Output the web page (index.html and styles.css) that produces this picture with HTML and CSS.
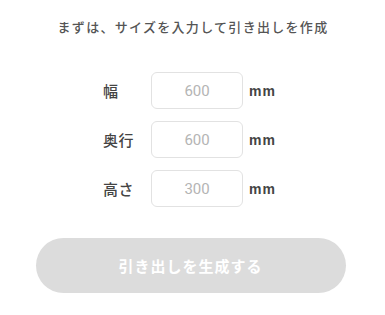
FILE: index.html
```html
<!DOCTYPE html>
<html lang="ja">
<head>
<meta charset="utf-8">
<link rel="stylesheet" href="styles.css">
</head>
<body>
<div class="page">
  <p class="title">まずは、サイズを入力して引き出しを作成</p>
  <div class="form">
    <div class="row">
      <span class="label">幅</span>
      <input class="field" type="text" placeholder="600">
      <span class="unit">mm</span>
    </div>
    <div class="row">
      <span class="label">奥行</span>
      <input class="field" type="text" placeholder="600">
      <span class="unit">mm</span>
    </div>
    <div class="row">
      <span class="label">高さ</span>
      <input class="field" type="text" placeholder="300">
      <span class="unit">mm</span>
    </div>
  </div>
  <button class="submit" type="button">引き出しを生成する</button>
</div>
</body>
</html>
```

FILE: styles.css
```css
html, body {
  margin: 0;
  padding: 0;
  background: #ffffff;
}
body {
  font-family: "Noto Sans CJK JP", "Noto Sans", sans-serif;
  color: #444;
}
.page {
  width: 385px;
  display: flex;
  flex-direction: column;
  align-items: center;
  padding-top: 17px;
}
.title {
  margin: 0;
  font-size: 13px;
  line-height: 20px;
  letter-spacing: 1.3px;
  font-weight: 500;
  color: #555;
  padding-left: 1px;
}
.form {
  margin-top: 35px;
  display: flex;
  flex-direction: column;
  gap: 12px;
  padding-right: 6px;
}
.row {
  display: grid;
  grid-template-columns: 40px 92px auto;
  column-gap: 8px;
  align-items: center;
}
.label {
  font-size: 15px;
  font-weight: 500;
  color: #444;
  letter-spacing: 0.5px;
}
.field {
  box-sizing: border-box;
  width: 92px;
  height: 37px;
  border: 1px solid #e2e2e2;
  border-radius: 6px;
  text-align: center;
  font-family: Roboto, "Liberation Sans", sans-serif;
  font-size: 15px;
  color: #444;
  padding: 0;
  outline: none;
  background: #fff;
}
.field::placeholder {
  color: #b4b4b4;
}
.unit {
  font-family: "Liberation Sans", Arial, sans-serif;
  font-weight: bold;
  font-size: 14px;
  letter-spacing: 1px;
  color: #444;
  margin-left: -2px;
}
.submit {
  margin-top: 31px;
  width: 310px;
  height: 55px;
  border: none;
  border-radius: 28px;
  background: #dcdcdc;
  color: #ffffff;
  font-family: "Noto Sans CJK JP", "Noto Sans", sans-serif;
  font-size: 15px;
  font-weight: bold;
  letter-spacing: 1px;
  padding: 0;
  margin-left: -4px;
}
```
